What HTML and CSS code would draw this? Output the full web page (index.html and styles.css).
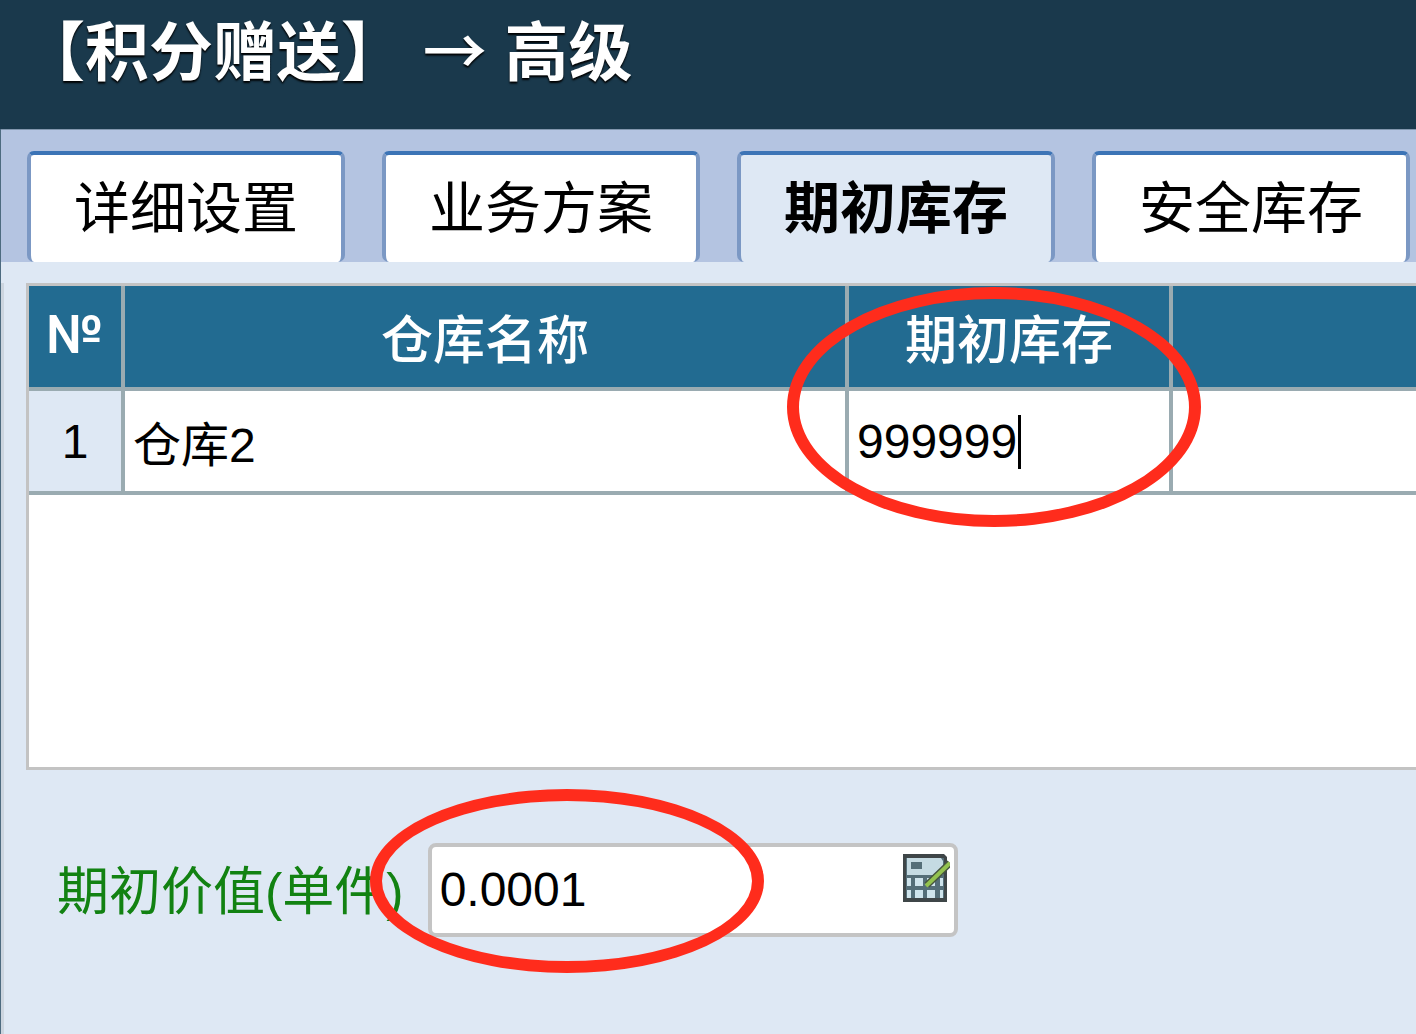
FILE: index.html
```
<!DOCTYPE html>
<html lang="zh-CN">
<head>
    <meta charset="UTF-8">
    <title>积分赠送 - 高级</title>
    <link rel="stylesheet" href="styles.css">
</head>
<body>
    <header class="title-bar">
        <h1>【积分赠送】 <span class="arrow">→</span> 高级</h1>
    </header>
    <main class="window">
        <nav class="tabs">
            <button type="button" class="tab">详细设置</button>
            <button type="button" class="tab">业务方案</button>
            <button type="button" class="tab active">期初库存</button>
            <button type="button" class="tab">安全库存</button>
        </nav>
        <section class="content">
            <div class="grid">
                <table>
                    <thead>
                        <tr>
                            <th class="col-no">№</th>
                            <th class="col-name">仓库名称</th>
                            <th class="col-stock" id="stockHead">期初库存</th>
                            <th class="col-rest"></th>
                        </tr>
                    </thead>
                    <tbody>
                        <tr>
                            <td class="row-no">1</td>
                            <td>仓库2</td>
                            <td class="stock-cell">
                                <input type="text" class="stock-input" aria-labelledby="stockHead" value="999999">
                                <span class="caret"></span>
                                <span class="mark mark-stock"></span>
                            </td>
                            <td></td>
                        </tr>
                    </tbody>
                </table>
            </div>
            <div class="form-row">
                <label for="price">期初价值(单件)</label>
                <div class="field">
                    <input type="text" id="price" name="price" value="0.0001">
                    <button type="button" class="calc" aria-label="计算器">
                        <svg viewBox="0 0 48 48" width="48" height="48">
                            <path d="M1 0h41l3 3v45H1z" fill="#3f4648"/>
                            <path d="M4 4h38v40H4z" fill="#546e78"/>
                            <path d="M5 4h34l2 3v14H5z" fill="#c5dbe3"/>
                            <path d="M9 8h11v7H9z" fill="#546e78"/>
                            <path d="M5 24h4v8H5zM13 24h8v8h-8zM25 24h8v8h-8zM38 24h3v8h-3zM5 36h4v8H5zM13 36h8v8h-8zM25 36h8v8h-8zM38 36h3v8h-3z" fill="#cfe4ec"/>
                            <path d="M25 31L48 9" stroke="#46543f" stroke-width="7"/>
                            <path d="M24 32L48 9" stroke="#93c24f" stroke-width="4"/>
                        </svg>
                    </button>
                    <span class="mark mark-price"></span>
                </div>
            </div>
        </section>
    </main>
</body>
</html>
```
FILE: styles.css
```
* { box-sizing: border-box; }
body { margin: 0; min-height: 100vh; display: flex; flex-direction: column; overflow: hidden; background: #dee8f4; color: #000; font-family: "Liberation Sans", "Noto Sans CJK SC", sans-serif; font-size: 48px; }
button, input { font: inherit; color: inherit; margin: 0; }

.title-bar { height: 129px; padding: 2px 21px; background: #1a394c; }
.title-bar h1 { margin: 0; font-size: 64px; line-height: 90px; color: #fff; white-space: nowrap; text-shadow: 0 2px 2px #000; }
.arrow { font-family: "Noto Sans CJK SC", sans-serif; font-weight: 500; }

.window { flex: 1; display: flex; flex-direction: column; border-left: 1px solid #4d6b80; }
.tabs { display: flex; gap: 37px; padding: 21px 0 0 26px; border-top: 1px solid #8297ae; background: #b4c4e1; }
.tab { flex: none; height: 111px; padding: 0 43px 10px; border: 4px solid #7b98c4; border-top-color: #3c74b6; border-bottom: 0; border-radius: 7px; background: #fff; font-size: 56px; white-space: nowrap; cursor: pointer; }
.tab.active { background: #dee8f4; font-weight: bold; }

.content { flex: 1; margin-top: 21px; padding-left: 22px; border-left: 3px solid #ccd5df; }
.grid { height: 487px; border: 3px solid #c3c3c3; border-right: 0; background: #fff; }
table { width: 100%; table-layout: fixed; border-collapse: separate; border-spacing: 0; }
th, td { padding: 0 8px; border-right: 4px solid #9aabb1; border-bottom: 4px solid #9aabb1; }
th:last-child, td:last-child { border-right: 0; }
th { height: 105px; background: #226b91; color: #fff; font-size: 52px; font-weight: 500; }
td { height: 104px; }
.col-no { width: 96px; padding: 0 0 4px; font-family: Inter, sans-serif; font-size: 52px; font-weight: bold; }
.col-name { width: 724px; }
.col-stock { width: 324px; }
.row-no { padding: 0; background: #dee8f4; text-align: center; }
.stock-cell { position: relative; }
.stock-input { display: block; width: 100%; height: 96px; padding: 0; border: 0; outline: none; background: none; }
.caret { position: absolute; left: 169px; top: 24px; width: 3px; height: 54px; background: #000; }

.form-row { display: flex; align-items: center; gap: 24px; margin-top: 73px; padding-left: 31px; }
label { padding-bottom: 6px; font-size: 52px; color: #128212; white-space: nowrap; }
.field { position: relative; display: flex; width: 530px; height: 94px; padding: 0 4px 2px 8px; border: 4px solid #c4c4c4; border-radius: 8px; background: #fff; }
.field input { flex: 1; min-width: 0; padding: 0; border: 0; outline: none; background: none; }
.calc { align-self: flex-start; display: flex; margin-top: 7px; padding: 0; border: 0; background: none; cursor: pointer; }

/* red rings over the values to fill in */
.mark { position: absolute; border: 12px solid #ff2c1c; border-radius: 50%; pointer-events: none; }
.mark-stock { left: -62px; top: -104px; width: 414px; height: 240px; }
.mark-price { left: -62px; top: -58px; width: 394px; height: 184px; }
```
